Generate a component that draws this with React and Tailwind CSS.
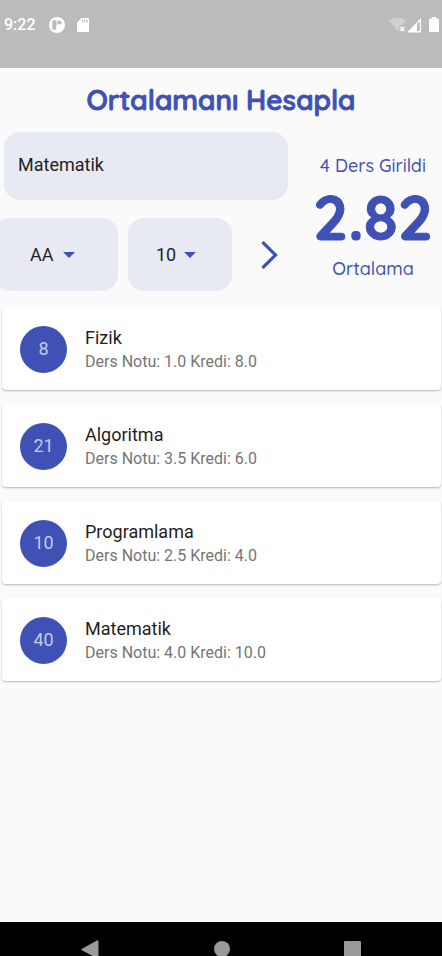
import { useState } from "react";

const courses = [
  { name: "Fizik", grade: "1.0", credit: "8.0", score: 8 },
  { name: "Algoritma", grade: "3.5", credit: "6.0", score: 21 },
  { name: "Programlama", grade: "2.5", credit: "4.0", score: 10 },
  { name: "Matematik", grade: "4.0", credit: "10.0", score: 40 },
];

function StatusBar() {
  return (
    <div className="flex h-[68px] items-start justify-between bg-[#bbbbbb] pl-1 pr-[3px] pt-[15px] text-white">
      <div className="flex h-5 items-center">
        <span className="w-[45px] text-base leading-5 font-medium">9:22</span>
        <svg className="h-4 w-4" viewBox="0 0 16 16">
          <circle cx="8" cy="8" r="8" fill="#fff" />
          <rect x="3.300" y="3" width="4" height="10" rx="1.800" fill="#bbb" />
          <circle cx="10.600" cy="5.400" r="2" fill="#bbb" />
          <path d="M8.200 3.500v4" stroke="#bbb" strokeWidth="1" />
        </svg>
        <svg className="ml-3 h-[14px] w-3" viewBox="0 0 12 14">
          <path d="M4.500 0H11q1 0 1 1v12q0 1-1 1H1q-1 0-1-1V4.500Z" fill="#fff" />
          <path d="M5.500 1.500v3M7.800 1.500v3M10 1.500v3" stroke="#bbb" strokeWidth="1.200" />
        </svg>
      </div>
      <div className="flex h-5 items-center">
        <svg className="h-4 w-[18px]" viewBox="0 0 18 16">
          <path d="M0 3.500Q8.500-2.500 17 3.500L13.500 8H10.500v4.500L8.500 14Z" fill="#d0d0d0" />
          <path d="m11.500 10 3.800 4m0-4-3.800 4" stroke="#fff" strokeWidth="1.600" />
        </svg>
        <svg className="h-4 w-[14px]" viewBox="0 0 14 16">
          <path fillRule="evenodd" d="M14 1v14.500H0ZM10 6.500V14h2.800V4.500Z" fill="#fff" />
        </svg>
        <svg className="ml-2 h-4 w-[10px]" viewBox="0 0 10 16">
          <path d="M3 0h4v1.500h2q1 0 1 1V14q0 1-1 1H1q-1 0-1-1V2.500q0-1 1-1h2Z" fill="#fff" />
        </svg>
      </div>
    </div>
  );
}

function PickerIcon() {
  return (
    <svg className="h-[6px] w-3" viewBox="0 0 12 6">
      <path d="M0 0h12L6 6Z" fill="#3f51b5" />
    </svg>
  );
}

function CourseCard({ course }) {
  return (
    <li className="flex h-[83px] items-center gap-[18px] rounded bg-white px-[18px] pt-px shadow-[0_1px_2px_rgba(0,0,0,0.28)]">
      <span className="flex h-[47px] w-[47px] shrink-0 items-center justify-center rounded-full bg-[#3f51b5] text-lg text-[#c5cae9]">
        {course.score}
      </span>
      <div className="pt-0.5">
        <h2 className="text-lg leading-6 text-[#1f1f1f]">{course.name}</h2>
        <p className="text-base leading-6 text-[#757575]">
          Ders Notu: {course.grade} Kredi: {course.credit}
        </p>
      </div>
    </li>
  );
}

export default function App() {
  const [name, setName] = useState("Matematik");
  const [letter, setLetter] = useState("AA");
  const [credit, setCredit] = useState("10");

  return (
    <div className="flex min-h-screen flex-col overflow-x-hidden bg-[#fafafa] font-['Roboto',sans-serif]">
      <StatusBar />
      <main className="flex-1">
        <h1 className="pt-3 text-center font-['Quicksand','Lato',sans-serif] text-[28px] leading-10 font-semibold text-[#3f51b5] [-webkit-text-stroke:1px_#3f51b5]">
          Ortalamanı Hesapla
        </h1>
        <div className="flex pt-3">
          <form className="min-w-0 flex-1" onSubmit={(e) => e.preventDefault()}>
            <div className="pl-1">
              <input
                aria-label="Ders adı"
                className="h-[68px] w-full rounded-2xl bg-[#e8eaf3] px-[14px] pb-1 text-lg text-[#1f1f1f] outline-none"
                value={name}
                onChange={(e) => setName(e.target.value)}
              />
            </div>
            <div className="flex items-center pt-[18px]">
              <div className="relative -ml-1.5 w-[124px]">
                <select
                  aria-label="Harf notu"
                  className="h-[73px] w-full appearance-none rounded-2xl bg-[#e8eaf3] pl-9 text-lg text-[#1f1f1f] outline-none"
                  value={letter}
                  onChange={(e) => setLetter(e.target.value)}
                >
                  <option>AA</option>
                  <option>BA</option>
                  <option>BB</option>
                  <option>CB</option>
                  <option>CC</option>
                </select>
                <span className="pointer-events-none absolute inset-y-0 right-[43px] flex items-center">
                  <PickerIcon />
                </span>
              </div>
              <div className="relative ml-[10px] w-[104px]">
                <select
                  aria-label="Kredi"
                  className="h-[73px] w-full appearance-none rounded-2xl bg-[#e8eaf3] pl-7 text-lg text-[#1f1f1f] outline-none"
                  value={credit}
                  onChange={(e) => setCredit(e.target.value)}
                >
                  <option>10</option>
                  <option>8</option>
                  <option>6</option>
                  <option>4</option>
                </select>
                <span className="pointer-events-none absolute inset-y-0 right-9 flex items-center">
                  <PickerIcon />
                </span>
              </div>
              <button type="submit" aria-label="Ders ekle" className="flex flex-1 justify-center pl-5">
                <svg className="h-7 w-[18px]" viewBox="0 0 18 28" fill="none">
                  <path d="M1.500 1 14.500 14 1.500 27" stroke="#3f51b5" strokeWidth="3.200" />
                </svg>
              </button>
            </div>
          </form>
          <section className="flex w-[154px] flex-col items-center pl-4 pt-[22px] font-['Quicksand','Lato',sans-serif] text-[#3f51b5]">
            <p className="text-lg leading-6 font-medium whitespace-nowrap">4 Ders Girildi</p>
            <p className="text-[62px] leading-[79px] font-bold [-webkit-text-stroke:1px_#3f51b5]">2.82</p>
            <p className="text-lg leading-6 font-medium">Ortalama</p>
          </section>
        </div>
        <ul className="flex flex-col gap-[14px] pl-0.5 pr-px pt-4">
          {courses.map((course) => (
            <CourseCard key={course.name} course={course} />
          ))}
        </ul>
      </main>
      <nav aria-label="Sistem" className="flex h-[34px] items-start justify-between overflow-hidden bg-black px-[81px] pt-[18px]">
        <button type="button" aria-label="Geri">
          <svg className="h-[19px] w-[18px]" viewBox="0 0 18 19">
            <path d="M16 .5q1.500-.8 1.500 1v16q0 1.500-1.500.8L1 10.300q-1.200-.8 0-1.600Z" fill="#999" />
          </svg>
        </button>
        <button type="button" aria-label="Ana ekran" className="mt-px h-4 w-4 rounded-full bg-[#999]" />
        <button type="button" aria-label="Son uygulamalar" className="mt-px h-[17px] w-[17px] rounded-[1px] bg-[#999]" />
      </nav>
    </div>
  );
}
